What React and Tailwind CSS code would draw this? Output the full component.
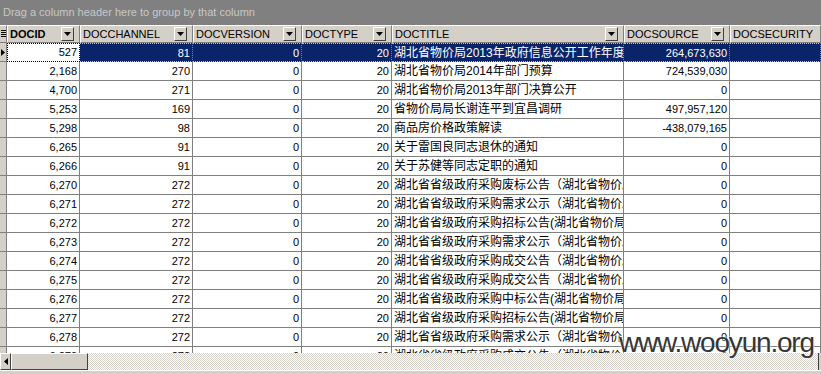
const rows = [
  ['527', '81', '0', '20', '湖北省物价局2013年政府信息公开工作年度报告', '264,673,630'],
  ['2,168', '270', '0', '20', '湖北省物价局2014年部门预算', '724,539,030'],
  ['4,700', '271', '0', '20', '湖北省物价局2013年部门决算公开', '0'],
  ['5,253', '169', '0', '20', '省物价局局长谢连平到宜昌调研', '497,957,120'],
  ['5,298', '98', '0', '20', '商品房价格政策解读', '-438,079,165'],
  ['6,265', '91', '0', '20', '关于雷国良同志退休的通知', '0'],
  ['6,266', '91', '0', '20', '关于苏健等同志定职的通知', '0'],
  ['6,270', '272', '0', '20', '湖北省省级政府采购废标公告（湖北省物价局', '0'],
  ['6,271', '272', '0', '20', '湖北省省级政府采购需求公示（湖北省物价局', '0'],
  ['6,272', '272', '0', '20', '湖北省省级政府采购招标公告(湖北省物价局', '0'],
  ['6,273', '272', '0', '20', '湖北省省级政府采购需求公示（湖北省物价局', '0'],
  ['6,274', '272', '0', '20', '湖北省省级政府采购成交公告（湖北省物价局', '0'],
  ['6,275', '272', '0', '20', '湖北省省级政府采购成交公告（湖北省物价局', '0'],
  ['6,276', '272', '0', '20', '湖北省省级政府采购中标公告(湖北省物价局', '0'],
  ['6,277', '272', '0', '20', '湖北省省级政府采购招标公告(湖北省物价局', '0'],
  ['6,278', '272', '0', '20', '湖北省省级政府采购需求公示（湖北省物价局', '0'],
  ['6,279', '272', '0', '20', '湖北省省级政府采购成交公告（湖北省物价局', '0'],
]

const headers = [
  { name: 'DOCID', bold: true },
  { name: 'DOCCHANNEL' },
  { name: 'DOCVERSION' },
  { name: 'DOCTYPE' },
  { name: 'DOCTITLE' },
  { name: 'DOCSOURCE' },
  { name: 'DOCSECURITY', noButton: true },
]

const gridCols = 'grid grid-cols-[7px_73px_113px_109px_90px_232px_106px_91px]'

function DropButton() {
  return (
    <div className="flex h-[14px] w-[13px] shrink-0 items-center justify-center border border-t-white border-l-white border-r-[#404040] border-b-[#404040] bg-[#d4d0c8]">
      <svg width="7" height="4" viewBox="0 0 7 4">
        <path d="M0 0h7L3.5 4z" fill="#000" />
      </svg>
    </div>
  )
}

function HeaderRow() {
  return (
    <div className={`${gridCols} h-[18px] bg-[#d4d0c8] text-[11px] text-black`}>
      <div className="flex items-center justify-center border-r border-b border-r-[#808080] border-b-[#808080] border-t border-t-white">
        <svg width="5" height="8" viewBox="0 0 5 8">
          <path d="M0 0.5h5M0 2.5h5M0 4.5h5M0 6.5h5" stroke="#000" strokeWidth="1" />
        </svg>
      </div>
      {headers.map((h) => (
        <div
          key={h.name}
          className="flex items-center justify-between overflow-hidden border-t border-l border-r border-b border-t-white border-l-white border-r-[#808080] border-b-[#808080] pl-[2px] pr-[5px]"
        >
          <span className={h.bold ? 'font-bold' : ''}>{h.name}</span>
          {!h.noButton && <DropButton />}
        </div>
      ))}
    </div>
  )
}

function DataRow({ row, selected }) {
  const [id, channel, version, type, title, source] = row
  const cell = 'h-[19px] overflow-hidden whitespace-nowrap border-r border-b border-[#808080] leading-[18px]'
  const sel = selected ? 'bg-[#0a246a] text-white border-y-[#c0c0c0] border-t border-dotted' : 'bg-white text-black'
  return (
    <div className={`${gridCols} text-[11px]`}>
      <div className="relative h-[19px] border-r border-b border-[#808080] bg-[#d4d0c8]">
        {selected && (
          <svg className="absolute left-[1px] top-[6px]" width="4" height="7" viewBox="0 0 4 7">
            <path d="M0 0l4 3.5L0 7z" fill="#000" />
          </svg>
        )}
      </div>
      <div
        className={
          selected
            ? 'h-[19px] border border-dotted border-black bg-white pr-[2px] text-right leading-[17px] text-black'
            : `${cell} bg-white pr-[2px] text-right text-black`
        }
      >
        {id}
      </div>
      <div className={`${cell} ${sel} pr-[2px] text-right`}>{channel}</div>
      <div className={`${cell} ${sel} pr-[2px] text-right`}>{version}</div>
      <div className={`${cell} ${sel} pr-[2px] text-right`}>{type}</div>
      <div className={`${cell} ${sel} pl-[2px] text-[12px]`}>{title}</div>
      <div className={`${cell} ${sel} pr-[2px] text-right`}>{source}</div>
      <div className={`${cell} ${sel}`}></div>
    </div>
  )
}

function ScrollBar() {
  return (
    <div className="flex h-[17px] bg-[repeating-conic-gradient(#d4d0c8_0_25%,#ffffff_0_50%)] bg-[length:2px_2px]">
      <div className="flex h-full w-[11px] items-center justify-center border border-t-white border-l-white border-r-[#404040] border-b-[#404040] bg-[#d4d0c8]">
        <svg width="4" height="7" viewBox="0 0 4 7">
          <path d="M4 0L0 3.5 4 7z" fill="#000" />
        </svg>
      </div>
      <div className="h-full w-[77px] border border-t-white border-l-white border-r-[#404040] border-b-[#404040] bg-[#d4d0c8]" />
      <div className="flex-1" />
      <div className="h-full w-[3px] border-l border-l-[#404040] bg-[#d4d0c8]" />
    </div>
  )
}

export default function App() {
  return (
    <div className="relative flex h-[374px] w-[821px] flex-col overflow-hidden bg-white font-['Liberation_Sans','Noto_Sans_CJK_SC',sans-serif]">
      <div className="flex h-[25px] items-center bg-[#808080] pl-[3px] text-[11px] text-[#c8c8c8]">
        Drag a column header here to group by that column
      </div>
      <HeaderRow />
      <div className="flex-1 overflow-hidden">
        {rows.map((r, i) => (
          <DataRow key={i} row={r} selected={i === 0} />
        ))}
      </div>
      <ScrollBar />
      <div className="h-[4px] border-t border-t-white bg-[#d4d0c8]" />

      <div className="absolute left-[619px] top-[329px] text-[28px] leading-none tracking-[-1.2px] text-[#363636] [text-shadow:0_0_2px_#ffffff,0_0_2px_#ffffff]">
        www.wooyun.org
      </div>
    </div>
  )
}
